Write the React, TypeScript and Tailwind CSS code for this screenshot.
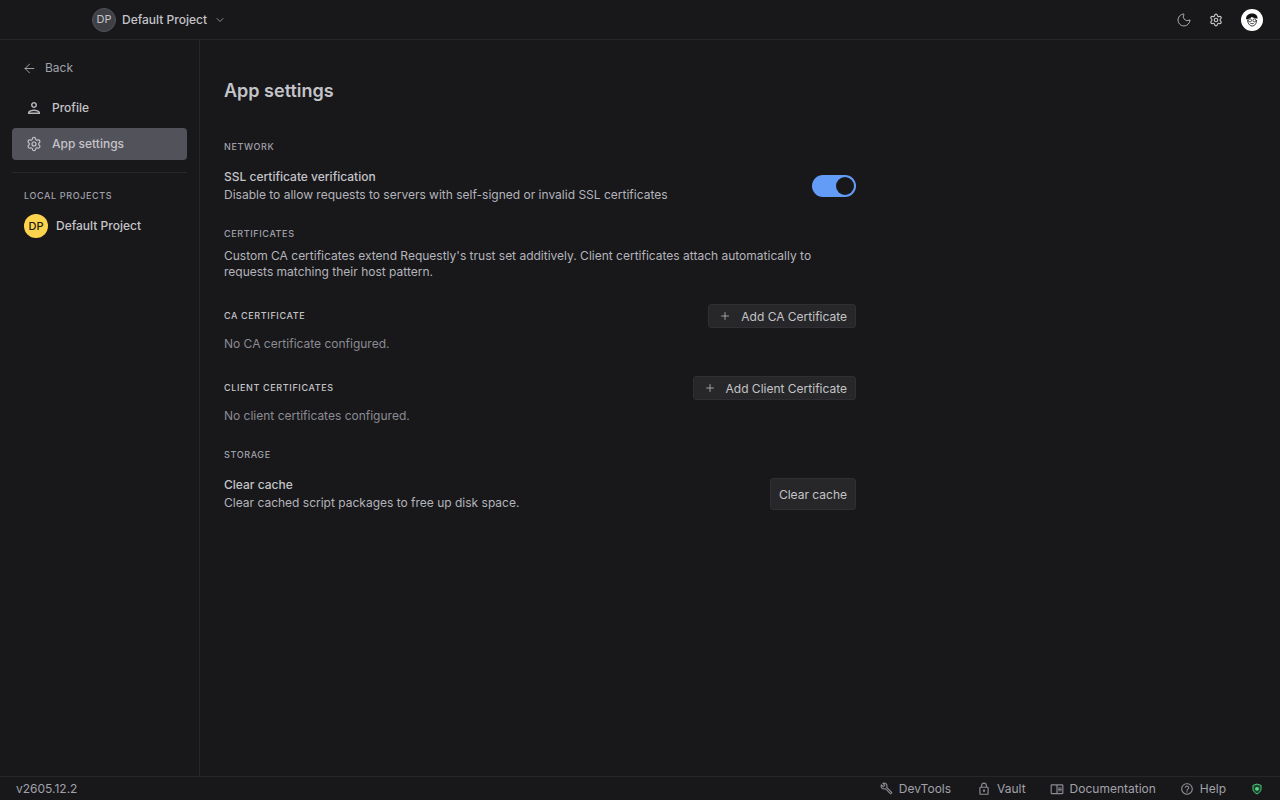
import type { ReactNode } from 'react';
import { ArrowLeft, ChevronDown, Moon, Plus, Settings } from 'lucide-react';
import { MdOutlineBuild, MdOutlineChromeReaderMode, MdOutlineHelpOutline, MdOutlineLock, MdOutlinePerson } from 'react-icons/md';

const ShieldIcon = ({ className }: { className?: string }) => (
  <svg viewBox="0 0 16 16" fill="none" stroke="currentColor" strokeWidth="1.2" className={className}>
    <path d="M8 1.4 13.4 3.2v4.6c0 3.1-2.3 5.3-5.4 6.8-3.1-1.5-5.4-3.7-5.4-6.8V3.2z" strokeLinejoin="round" fillOpacity="0.2" fill="currentColor" />
    <circle cx="8" cy="7.8" r="2.6" fill="currentColor" stroke="none" />
  </svg>
);

const Face = () => (
  <svg viewBox="0 0 22 22" className="h-[22px] w-[22px]">
    <circle cx="11" cy="11" r="11" fill="#fff" />
    <path d="M5.2 10.4c-.6-3.6 2-6 5.8-6 3.2 0 5.8 1.8 5.6 5.2-2.6-.2-4.4-.8-5.8-1.6-1 1-2.8 2-5.6 2.4z" fill="#111" />
    <path d="M6.6 10.6c0 3.6 2 6.4 4.6 6.4s4.4-2.6 4.4-6" fill="none" stroke="#222" strokeWidth="0.9" />
    <circle cx="9" cy="11.4" r="1.5" fill="none" stroke="#222" strokeWidth="0.8" />
    <circle cx="13.4" cy="11.4" r="1.5" fill="none" stroke="#222" strokeWidth="0.8" />
    <path d="M9.4 14.6h3.4" stroke="#222" strokeWidth="0.8" />
  </svg>
);

function SectionLabel({ children, light }: { children: ReactNode; light?: boolean }) {
  return (
    <div className={`text-[9px] font-medium uppercase leading-[14px] tracking-[0.07em] ${light ? 'text-[#c4c4c8]' : 'text-[#a1a1aa]'}`}>
      {children}
    </div>
  );
}

function AddButton({ label }: { label: string }) {
  return (
    <button className="flex h-6 items-center rounded-[3px] border border-[#2f2f33] bg-[#27272a] pl-2.5 pr-2 text-xs text-[#c4c4c8]">
      <Plus className="mr-2.5 h-3 w-3 text-[#c4c4c8]" strokeWidth={1.5} />
      <span className="pt-px">{label}</span>
    </button>
  );
}

function FooterLink({ icon, label, className }: { icon: ReactNode; label: string; className?: string }) {
  return (
    <div className={`flex items-center gap-1.5 text-xs text-[#a1a1aa] ${className ?? ''}`}>
      <span className="text-[#8b8b92]">{icon}</span>
      <span>{label}</span>
    </div>
  );
}

export default function App() {
  return (
    <div className="flex h-screen w-full flex-col overflow-hidden bg-[#18181b] font-['Inter',sans-serif] text-xs text-[#c4c4c8]">
      <header className="flex h-10 shrink-0 items-center justify-between border-b border-[#27272a] pl-[92px] pr-[17px]">
        <div className="flex items-center">
          <div className="flex h-6 w-6 items-center justify-center rounded-full border border-[#52525b] bg-[#3f3f46] text-[11px] text-[#c4c4c8]">DP</div>
          <span className="ml-1.5 font-medium text-[#c4c4c8]">Default Project</span>
          <ChevronDown className="ml-[7px] h-3 w-3 text-[#8b8b92]" />
        </div>
        <div className="flex items-center">
          <Moon className="h-4 w-4 text-[#c4c4c8]" strokeWidth={1.25} />
          <Settings className="ml-[17px] h-3.5 w-3.5 text-[#c4c4c8]" strokeWidth={2} />
          <div className="ml-[18px]"><Face /></div>
        </div>
      </header>

      <div className="flex min-h-0 flex-1">
        <aside className="w-[200px] shrink-0 border-r border-[#27272a] px-3">
          <div className="mt-4 flex h-6 items-center pl-[10px] text-[#a1a1aa]">
            <ArrowLeft className="h-[15px] w-[15px] text-[#c4c4c8]" strokeWidth={1.25} />
            <span className="ml-2">Back</span>
          </div>
          <div className="mt-3 flex h-8 items-center pl-[13px] font-medium text-[#c4c4c8]">
            <MdOutlinePerson className="h-[18px] w-[18px] text-[#b4b4ba]" />
            <span className="ml-[9px]">Profile</span>
          </div>
          <div className="mt-1 flex h-8 w-[175px] items-center rounded bg-[#52525b] pl-[14px] font-medium text-[#c4c4c8]">
            <Settings className="h-4 w-4 text-[#c4c4c8]" strokeWidth={1.75} />
            <span className="ml-[10px]">App settings</span>
          </div>
          <div className="mt-3 h-px w-[175px] bg-[#27272a]" />
          <div className="ml-3 mt-4"><SectionLabel>Local projects</SectionLabel></div>
          <div className="ml-3 mt-[11px] flex items-center">
            <div className="flex h-6 w-6 items-center justify-center rounded-full bg-[#fcd34d] text-[11px] font-medium text-[#18181b]">DP</div>
            <span className="ml-2 font-medium text-[#c4c4c8]">Default Project</span>
          </div>
        </aside>

        <main className="min-w-0 flex-1 pl-6 pt-10">
          <div className="w-[632px]">
            <h1 className="text-lg font-semibold leading-[22px] text-[#c4c4c8]">App settings</h1>

            <div className="mt-[38px]"><SectionLabel>Network</SectionLabel></div>
            <div className="mt-[14px] flex items-center justify-between">
              <div className="leading-[18px]">
                <div className="font-medium text-[#c4c4c8]">SSL certificate verification</div>
                <div className="text-[#b4b4ba]">Disable to allow requests to servers with self-signed or invalid SSL certificates</div>
              </div>
              <div className="flex h-[22px] w-11 items-center justify-end rounded-full bg-[#639cf7] pr-0.5">
                <div className="h-[18px] w-[18px] rounded-full bg-[#18181b]" />
              </div>
            </div>

            <div className="mt-[23px]"><SectionLabel>Certificates</SectionLabel></div>
            <p className="mt-[7px] w-[600px] leading-4 text-[#b4b4ba]">
              Custom CA certificates extend Requestly's trust set additively. Client certificates attach automatically to requests matching their host pattern.
            </p>

            <div className="mt-6 flex items-center justify-between">
              <SectionLabel light>CA certificate</SectionLabel>
              <AddButton label="Add CA Certificate" />
            </div>
            <p className="mt-2 leading-4 text-[#8b8b92]">No CA certificate configured.</p>

            <div className="mt-6 flex items-center justify-between">
              <SectionLabel light>Client certificates</SectionLabel>
              <AddButton label="Add Client Certificate" />
            </div>
            <p className="mt-2 leading-4 text-[#8b8b92]">No client certificates configured.</p>

            <div className="mt-6"><SectionLabel>Storage</SectionLabel></div>
            <div className="mt-3.5 flex items-center justify-between">
              <div className="leading-[18px]">
                <div className="font-medium text-[#c4c4c8]">Clear cache</div>
                <div className="text-[#b4b4ba]">Clear cached script packages to free up disk space.</div>
              </div>
              <button className="flex h-8 items-center rounded-[3px] border border-[#2f2f33] bg-[#27272a] px-2 pt-px text-xs text-[#c4c4c8]">Clear cache</button>
            </div>
          </div>
        </main>
      </div>

      <footer className="flex h-6 shrink-0 items-center justify-between border-t border-[#27272a] pl-4 pr-[17px]">
        <span className="text-[#a1a1aa]">v2605.12.2</span>
        <div className="flex items-center gap-6">
          <FooterLink icon={<MdOutlineBuild className="h-[13px] w-[13px]" />} label="DevTools" className="mr-0.5" />
          <FooterLink icon={<MdOutlineLock className="h-3.5 w-3.5" />} label="Vault" />
          <FooterLink icon={<MdOutlineChromeReaderMode className="h-3.5 w-3.5" />} label="Documentation" />
          <FooterLink icon={<MdOutlineHelpOutline className="h-3.5 w-3.5" />} label="Help" />
          <ShieldIcon className="ml-px h-3 w-3 text-[#4ade80]" />
        </div>
      </footer>
    </div>
  );
}
